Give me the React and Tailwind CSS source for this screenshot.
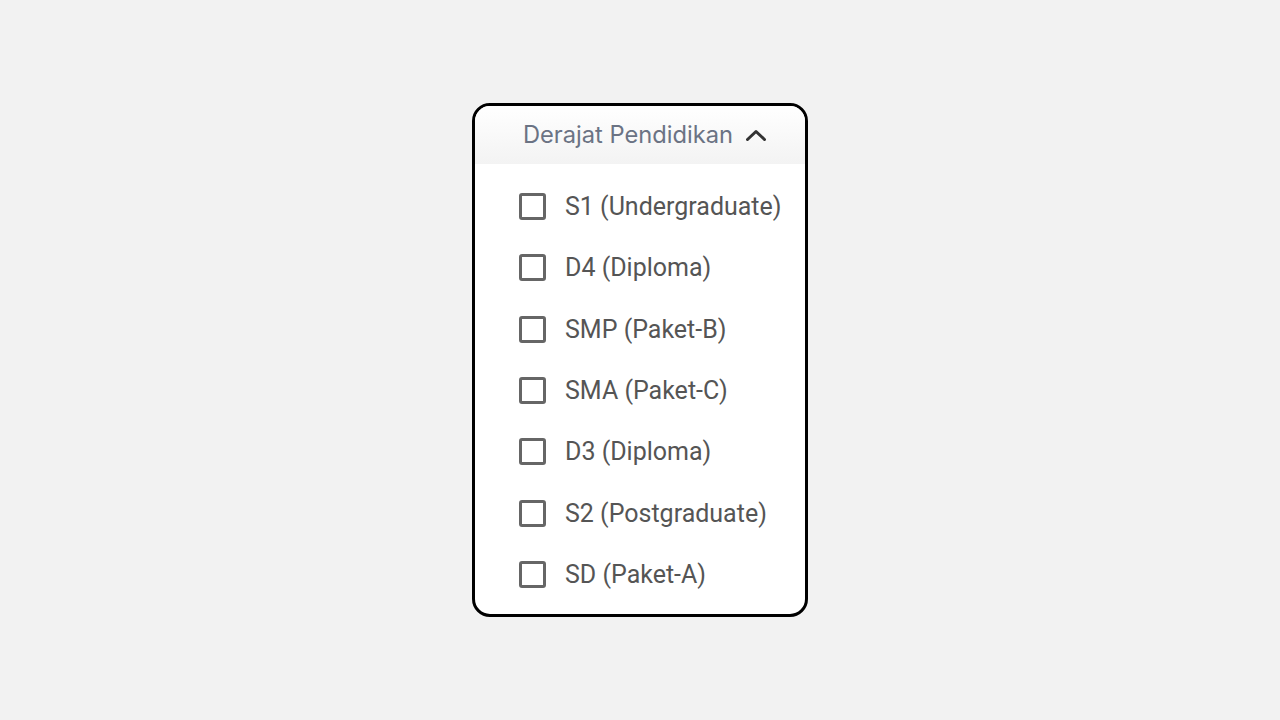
import React from "react";

const options = [
  "S1 (Undergraduate)",
  "D4 (Diploma)",
  "SMP (Paket-B)",
  "SMA (Paket-C)",
  "D3 (Diploma)",
  "S2 (Postgraduate)",
  "SD (Paket-A)",
];

export default function App() {
  return (
    <div className="w-screen h-screen bg-[#f2f2f2] flex items-start justify-center pt-[103px]">
      <div className="w-[336px] h-[514px] bg-white border-[3px] border-black rounded-[18px] overflow-hidden flex flex-col">
        <div className="h-[58px] bg-gradient-to-b from-white to-[#f3f3f3] flex items-center justify-center gap-[11px] pl-[11px]">
          <span className="text-[23.7px] leading-none text-[#6b7384] font-['Inter',sans-serif]">
            Derajat Pendidikan
          </span>
          <svg width="24" height="24" viewBox="0 0 24 24" fill="none" stroke="#333" strokeWidth="3" strokeLinecap="round" strokeLinejoin="round">
            <path d="M3.5 16.5l8.5-8 8.5 8" />
          </svg>
        </div>
        <div className="flex flex-col pt-[12px] pl-[44px]">
          {options.map((o) => (
            <label key={o} className="h-[61.33px] flex items-center gap-[19px]">
              <span className="w-[27px] h-[27px] border-[3px] border-[#666] rounded-[3px] bg-white" />
              <span className="text-[25px] leading-none text-[#555] font-['Roboto',sans-serif]">{o}</span>
            </label>
          ))}
        </div>
      </div>
    </div>
  );
}
